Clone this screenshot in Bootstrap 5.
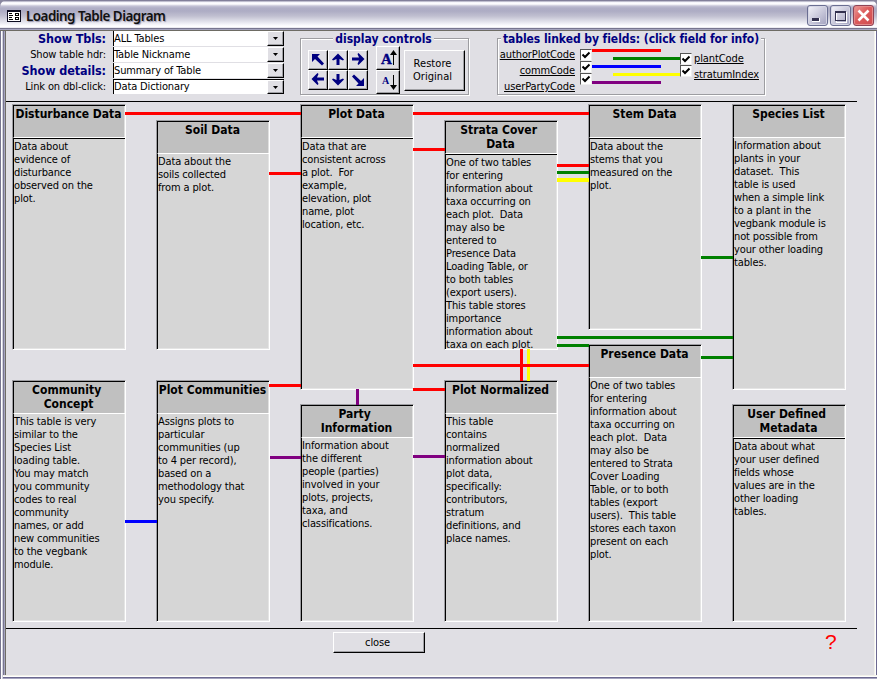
<!DOCTYPE html>
<html lang="en">
<head>
<meta charset="utf-8">
<title>Loading Table Diagram</title>
<link href="https://cdn.jsdelivr.net/npm/bootstrap@5.3.0/dist/css/bootstrap.min.css" rel="stylesheet">
<style>
  body { font-family: "DejaVu Sans Condensed", "Noto Sans", sans-serif; font-size: 11px; line-height: 13px; letter-spacing: -.13px; color: #000; background: #8a88a0; }
  svg { display: block; flex: none; }
  .win { width: 877px; height: 679px; overflow: hidden; }
  .titlebar { height: 31px; padding: 5px 3px 0 7px; border-radius: 7px 7px 0 0; background: linear-gradient(#77758f 0, #8d8ba5 1px, #f4f4fa 2px, #fff 4px, #c4c3d6 6px, #b0afc6 8px, #adacc4 11px, #c0bfd0 16px, #dedee8 21px, #f8f8fc 25px, #fff 27px, #d8d7e4 28px, #77758f 28px, #77758f 29px, #a5a4bf 29px, #a5a4bf 30px, #6e6c64 30px); }
  .appicon { margin-top: 5px; }
  .titletext { font: 600 13.4px/18px "Noto Sans", sans-serif; letter-spacing: -.5px; margin: 2px auto 0 5px; color: #111; text-shadow: 1px 1px 1px #9a99b0; }
  .capbtns { gap: 2px; }
  .capbtn { width: 21px; height: 21px; border: 1px solid #6a6e92; border-radius: 3px; background: linear-gradient(135deg, #f4f4fa, #b5b4cc 75%, #a3a2c0); box-shadow: inset 0 0 0 1px #d5d5e4; }
  .capbtn-x { border-color: #8e4456; background: linear-gradient(135deg, #ec9a98, #dc5c5c 45%, #cf4b50); box-shadow: inset 0 0 0 1px #e58a8a; }
  .frame { height: 648px; padding: 0 2px 4px 6px; background: linear-gradient(90deg, #77758f 1px, #fff 1px, #fff 2px, #d0d0de 2px, #d0d0de 3px, #77758f 3px, #77758f 4px, #a5a4bf 4px, #a5a4bf 5px, #6e6c64 5px, #6e6c64 6px, #f3f2ea 6px, #f3f2ea 875px, #fff 875px, #fff 876px, #6c6990 876px); }
  .frame::after { content: ""; display: block; height: 4px; margin: 0 -2px 0 -3px; background: linear-gradient(#f3f2ea 1px, #fff 1px, #fff 2px, #6c6990 2px, #6c6990 3px, #a5a4bf 3px); }
  .client { height: 644px; background: #e0dfe4; margin-right: 1px; }
  .toolband { height: 70px; }
  .rule { height: 1px; width: 851px; background: #000; }
  .combos { width: 279px; }
  .combo-row { height: 16px; }
  .combo-label { width: 107px; text-align: right; padding: 1px 7px 0 0; white-space: nowrap; }
  .hot { color: #000080; font-weight: bold; font-size: 12px; letter-spacing: 0; }
  .combo-label.hot { font-size: 12.5px; letter-spacing: -.1px; }
  .combo-box { width: 171px; height: 15px; background: #fff; border-left: 1px solid #000; }
  .combo-box span { padding-top: 1px; }
  .combo-last { border-top: 1px solid #000; }
  .combo-last span { padding-top: 0; }
  .drop { width: 17px; height: 15px; background: #e0dfe4; border: 1px solid; border-color: #fff #000 #000 #fff; box-shadow: inset -1px -1px 0 #a0a0a4; }
  .combo-last .drop { height: 14px; }
  .grp { border: 1px solid #9d9da1; box-shadow: 1px 1px 0 #fff, inset 1px 1px 0 #fff; height: 57px; margin-top: 7px; }
  .grp-ctl { width: 169px; margin-left: 15px; }
  .grp-link { width: 268px; margin-left: 28px; }
  .grp-title { display: block; width: max-content; background: #e0dfe4; padding: 0 2px; margin: -7px auto 0; height: 14px; line-height: 14px; white-space: nowrap; }
  .grp-ctl .grp-title { position: relative; left: -1px; }
  .grp-link .grp-title { letter-spacing: -.06px; }
  .raised { background: #e0dfe4; border: 1px solid; border-color: #fff #000 #000 #fff; box-shadow: inset -1px -1px 0 #a0a0a4; padding: 0; border-radius: 0; color: #000; font-size: 11px; line-height: 13px; letter-spacing: inherit; }
  .arrows { grid-template-columns: repeat(3, 20px); grid-auto-rows: 20px; margin: 4px 0 0 7px; }
  .sizers { width: 24px; margin: 0 0 0 8px; }
  .sizers .raised { height: 24px; }
  .restore { width: 61px; height: 41px; margin: 4px 0 0 4px; }
  .restore.raised { letter-spacing: .05px; padding-bottom: 1px; padding-right: 4px; }
  .fields { text-decoration: underline; line-height: 16px; white-space: nowrap; }
  .fields-l { width: 77px; text-align: right; letter-spacing: -.1px; padding-top: 1px; }
  .fields-r { padding: 5px 0 0 2px; letter-spacing: -.1px; }
  .ticks { width: 12px; margin-top: 7px; }
  .ticks-l { margin: 3px 0 0 5px; }
  .tick { width: 12px; height: 12px; background: #fff; border: 1px solid; border-color: #555 #eee #eee #555; }
  .canvas { position: relative; height: 526px; width: 868px; }
  .canvas > svg { position: absolute; left: 0; top: 0; }
  .node { position: absolute; width: 114px; border: 1px solid; border-color: #9d9da1 #fff #fff #9d9da1; background: #d6d6d6; overflow: hidden; }
  .node-head { height: 33px; background: #c0c0c0; border: solid #000; border-width: 1px 0 0 1px; border-bottom: 1px solid #fff; text-align: center; font-weight: bold; font-size: 12px; line-height: 14px; letter-spacing: 0; white-space: nowrap; padding: 1px 2px 0 0; box-shadow: inset -1px 0 0 #e0e0e0; }
  .node-body { height: calc(100% - 33px); border-left: 1px solid #000; padding-top: 1px; white-space: pre; box-shadow: inset -1px -1px 0 #e4e4e4; }
  .sunk .node-body { border-top: 1px solid #000; }
  .r1 { top: 2px; } .r2 { top: 18px; } .r3 { top: 278px; } .r4 { top: 302px; } .r5 { top: 242px; }
  .c1 { left: 6px; } .c2 { left: 150px; } .c3 { left: 294px; } .c4 { left: 438px; } .c5 { left: 582px; } .c6 { left: 726px; }
  .h246 { height: 246px; } .h230 { height: 230px; } .h286 { height: 286px; } .h226 { height: 226px; }
  .h242 { height: 242px; } .h218 { height: 218px; } .h278 { height: 278px; }
  .closebtn { width: 92px; height: 21px; margin: 3px 0 0 327px; }
  .closebtn.raised { padding-right: 3px; }
  .help { color: #f00; font: 21px/24px "Liberation Sans", sans-serif; margin: 1px 0 0 400px; }
</style>
</head>
<body>
<div class="win">
  <div class="titlebar d-flex">
    <svg class="appicon" width="14" height="12" viewBox="0 0 14 12" shape-rendering="crispEdges"><rect width="14" height="12" fill="#0c0c20"/><rect x="1" y="2" width="12" height="9" fill="#fff"/><path d="M2 3.500h3M2 5.500h4M2 7.500h3M2 9.500h4M8.500 3.500h3v2h-3zM8.500 7.500h3v2h-3z" stroke="#000" fill="none"/></svg>
    <span class="titletext">Loading Table Diagram</span>
    <div class="capbtns d-flex">
      <div class="capbtn"><svg width="19" height="19"><rect x="4" y="12" width="8" height="4" fill="#fff"/><rect x="4" y="12" width="7" height="3" fill="#33314f"/></svg></div>
      <div class="capbtn"><svg width="19" height="19" shape-rendering="crispEdges"><path d="M5 6h10v10H5z" fill="none" stroke="#fff"/><path d="M4.500 5.500h10v9h-10z" fill="none" stroke="#33314f"/><path d="M4 6h11" stroke="#33314f" stroke-width="2"/></svg></div>
      <div class="capbtn capbtn-x"><svg width="19" height="19"><path d="M4.500 4.500l10 10M14.500 4.500l-10 10" stroke="#fff" stroke-width="2.600"/></svg></div>
    </div>
  </div>
  <div class="frame">
    <div class="client">
      <div class="toolband d-flex">
        <div class="combos">
          <div class="combo-row d-flex"><label class="combo-label hot">Show Tbls:</label><div class="combo-box d-flex justify-content-between"><span>ALL Tables</span><i class="drop"><svg width="15" height="13"><path d="M5 5h5L7.500 8z"/></svg></i></div></div>
          <div class="combo-row d-flex"><label class="combo-label">Show table hdr:</label><div class="combo-box d-flex justify-content-between"><span>Table Nickname</span><i class="drop"><svg width="15" height="13"><path d="M5 5h5L7.500 8z"/></svg></i></div></div>
          <div class="combo-row d-flex"><label class="combo-label hot">Show details:</label><div class="combo-box d-flex justify-content-between"><span>Summary of Table</span><i class="drop"><svg width="15" height="13"><path d="M5 5h5L7.500 8z"/></svg></i></div></div>
          <div class="combo-row d-flex"><label class="combo-label">Link on dbl-click:</label><div class="combo-box combo-last d-flex justify-content-between"><span>Data Dictionary</span><i class="drop"><svg width="15" height="12"><path d="M5 5h5L7.500 8z"/></svg></i></div></div>
        </div>
        <div class="grp grp-ctl">
          <span class="grp-title hot">display controls</span>
          <div class="d-flex">
            <div class="arrows d-grid">
              <button class="raised"><svg width="18" height="18" viewBox="0 0 18 18" fill="#000080"><path d="M3 3h8L8.500 5.500l6.500 7-2 2L6 8 3 11z"/></svg></button>
              <button class="raised"><svg width="18" height="18" viewBox="0 0 18 18" fill="#000080"><path d="M9 2.500l6 6-1 1-3.500-1.500v6h-3V8L4 9.500l-1-1z"/></svg></button>
              <button class="raised"><svg width="18" height="18" viewBox="0 0 18 18" fill="#000080"><path d="M15.500 8l-6 6-1-1L10 9.500H3v-3h7L8.500 3l1-1z"/></svg></button>
              <button class="raised"><svg width="18" height="18" viewBox="0 0 18 18" fill="#000080"><path d="M2.500 8l6-6 1 1L8 6.500h7v3H8L9.500 13l-1 1z"/></svg></button>
              <button class="raised"><svg width="18" height="18" viewBox="0 0 18 18" fill="#000080"><path d="M9 14.500l6-6-1-1L10.500 9V3h-3v6L4 7.500l-1 1z"/></svg></button>
              <button class="raised"><svg width="18" height="18" viewBox="0 0 18 18" fill="#000080"><path d="M15 15H7l2.500-2.500-6.500-7 2-2L12 10l3-3z"/></svg></button>
            </div>
            <div class="sizers d-flex flex-column">
              <button class="raised"><svg width="22" height="22" viewBox="0 0 22 22"><text x="4" y="17" font-family="Liberation Serif, serif" font-weight="bold" font-size="15" letter-spacing="0" fill="#000080" stroke="#000080" stroke-width=".4">A</text><path d="M16.500 18V5" stroke="#000"/><path d="M13 8l3.500-5L20 8z"/></svg></button>
              <button class="raised"><svg width="22" height="22" viewBox="0 0 22 22"><text x="5" y="13" font-family="Liberation Serif, serif" font-weight="bold" font-size="10" letter-spacing="0" fill="#000080">A</text><path d="M16.500 4v11" stroke="#000"/><path d="M13 14l3.500 5 3.500-5z"/></svg></button>
            </div>
            <button class="raised restore">Restore<br>Original</button>
          </div>
        </div>
        <div class="grp grp-link">
          <span class="grp-title hot">tables linked by fields: (click field for info)</span>
          <div class="d-flex">
            <div class="fields fields-l">authorPlotCode<br>commCode<br>userPartyCode</div>
            <div class="ticks ticks-l">
              <div class="tick"><svg width="10" height="10"><path d="M1.500 4.500l2.500 2.500 4.500-4.500" fill="none" stroke="#000" stroke-width="2"/></svg></div>
              <div class="tick"><svg width="10" height="10"><path d="M1.500 4.500l2.500 2.500 4.500-4.500" fill="none" stroke="#000" stroke-width="2"/></svg></div>
              <div class="tick"><svg width="10" height="10"><path d="M1.500 4.500l2.500 2.500 4.500-4.500" fill="none" stroke="#000" stroke-width="2"/></svg></div>
            </div>
            <svg width="88" height="40" shape-rendering="crispEdges"><path fill="red" d="M0 3h69v3H0z"/><path fill="green" d="M21 11h67v3H21z"/><path fill="blue" d="M0 19h69v3H0z"/><path fill="#ff0" d="M21 27h67v3H21z"/><path fill="purple" d="M0 35h69v3H0z"/></svg>
            <div class="ticks">
              <div class="tick"><svg width="10" height="10"><path d="M1.500 4.500l2.500 2.500 4.500-4.500" fill="none" stroke="#000" stroke-width="2"/></svg></div>
              <div class="tick"><svg width="10" height="10"><path d="M1.500 4.500l2.500 2.500 4.500-4.500" fill="none" stroke="#000" stroke-width="2"/></svg></div>
            </div>
            <div class="fields fields-r">plantCode<br>stratumIndex</div>
          </div>
        </div>
      </div>
      <div class="rule"></div>
      <div class="canvas">
        <div class="node sunk r1 c1 h246"><div class="node-head">Disturbance Data</div><div class="node-body">Data about
evidence of
disturbance
observed on the
plot.</div></div>
        <div class="node r2 c2 h230"><div class="node-head">Soil Data</div><div class="node-body">Data about the
soils collected
from a plot.</div></div>
        <div class="node sunk r1 c3 h286"><div class="node-head">Plot Data</div><div class="node-body">Data that are
consistent across
a plot.  For
example,
elevation, plot
name, plot
location, etc.</div></div>
        <div class="node sunk r2 c4 h230"><div class="node-head">Strata Cover&nbsp;<br>Data</div><div class="node-body">One of two tables
for entering
information about
taxa occurring on
each plot.  Data
may also be
entered to
Presence Data
Loading Table, or
to both tables
(export users).
This table stores
importance
information about
taxa on each plot.</div></div>
        <div class="node sunk r1 c5 h226"><div class="node-head">Stem Data</div><div class="node-body">Data about the
stems that you
measured on the
plot.</div></div>
        <div class="node r1 c6 h286"><div class="node-head">Species List</div><div class="node-body">Information about
plants in your
dataset.  This
table is used
when a simple link
to a plant in the
vegbank module is
not possible from
your other loading
tables.</div></div>
        <div class="node r3 c1 h242"><div class="node-head">Community&nbsp;<br>Concept</div><div class="node-body">This table is very
similar to the
Species List
loading table.
You may match
you community
codes to real
community
names, or add
new communities
to the vegbank
module.</div></div>
        <div class="node r3 c2 h242"><div class="node-head">Plot Communities</div><div class="node-body">Assigns plots to
particular
communities (up
to 4 per record),
based on a
methodology that
you specify.</div></div>
        <div class="node r4 c3 h218"><div class="node-head">Party&nbsp;<br>Information</div><div class="node-body">Information about
the different
people (parties)
involved in your
plots, projects,
taxa, and
classifications.</div></div>
        <div class="node r3 c4 h242"><div class="node-head">Plot Normalized</div><div class="node-body">This table
contains
normalized
information about
plot data,
specifically:
contributors,
stratum
definitions, and
place names.</div></div>
        <div class="node r5 c5 h278"><div class="node-head">Presence Data</div><div class="node-body">One of two tables
for entering
information about
taxa occurring on
each plot.  Data
may also be
entered to Strata
Cover Loading
Table, or to both
tables (export
users).  This table
stores each taxon
present on each
plot.</div></div>
        <div class="node sunk r4 c6 h218"><div class="node-head">User Defined&nbsp;<br>Metadata</div><div class="node-body">Data about what
your user defined
fields whose
values are in the
other loading
tables.</div></div>
        <svg width="868" height="526" viewBox="6 102 868 526" shape-rendering="crispEdges">
          <path fill="green" d="M557 171h32v3h-32zM701 256h32v3h-32zM557 336h176v3H557zM557 344h32v3h-32zM701 356h32v3h-32z"/>
          <path fill="#ff0" d="M557 178h32v4h-32zM527 349h3v32h-3z"/>
          <path fill="red" d="M125 112h176v3H125zM413 112h176v3H413zM269 172h32v3h-32zM413 148h32v3h-32zM557 164h32v3h-32zM413 364h176v3H413zM269 384h32v3h-32zM413 388h32v3h-32zM520 349h3v32h-3z"/>
          <path fill="purple" d="M356 389h3v16h-3zM270 456h31v3h-31zM413 455h32v3h-32z"/>
          <path fill="blue" d="M125 520h32v3h-32z"/>
        </svg>
      </div>
      <div class="rule"></div>
      <div class="d-flex"><button class="raised closebtn">close</button><span class="help">?</span></div>
    </div>
  </div>
</div>
</body>
</html>
